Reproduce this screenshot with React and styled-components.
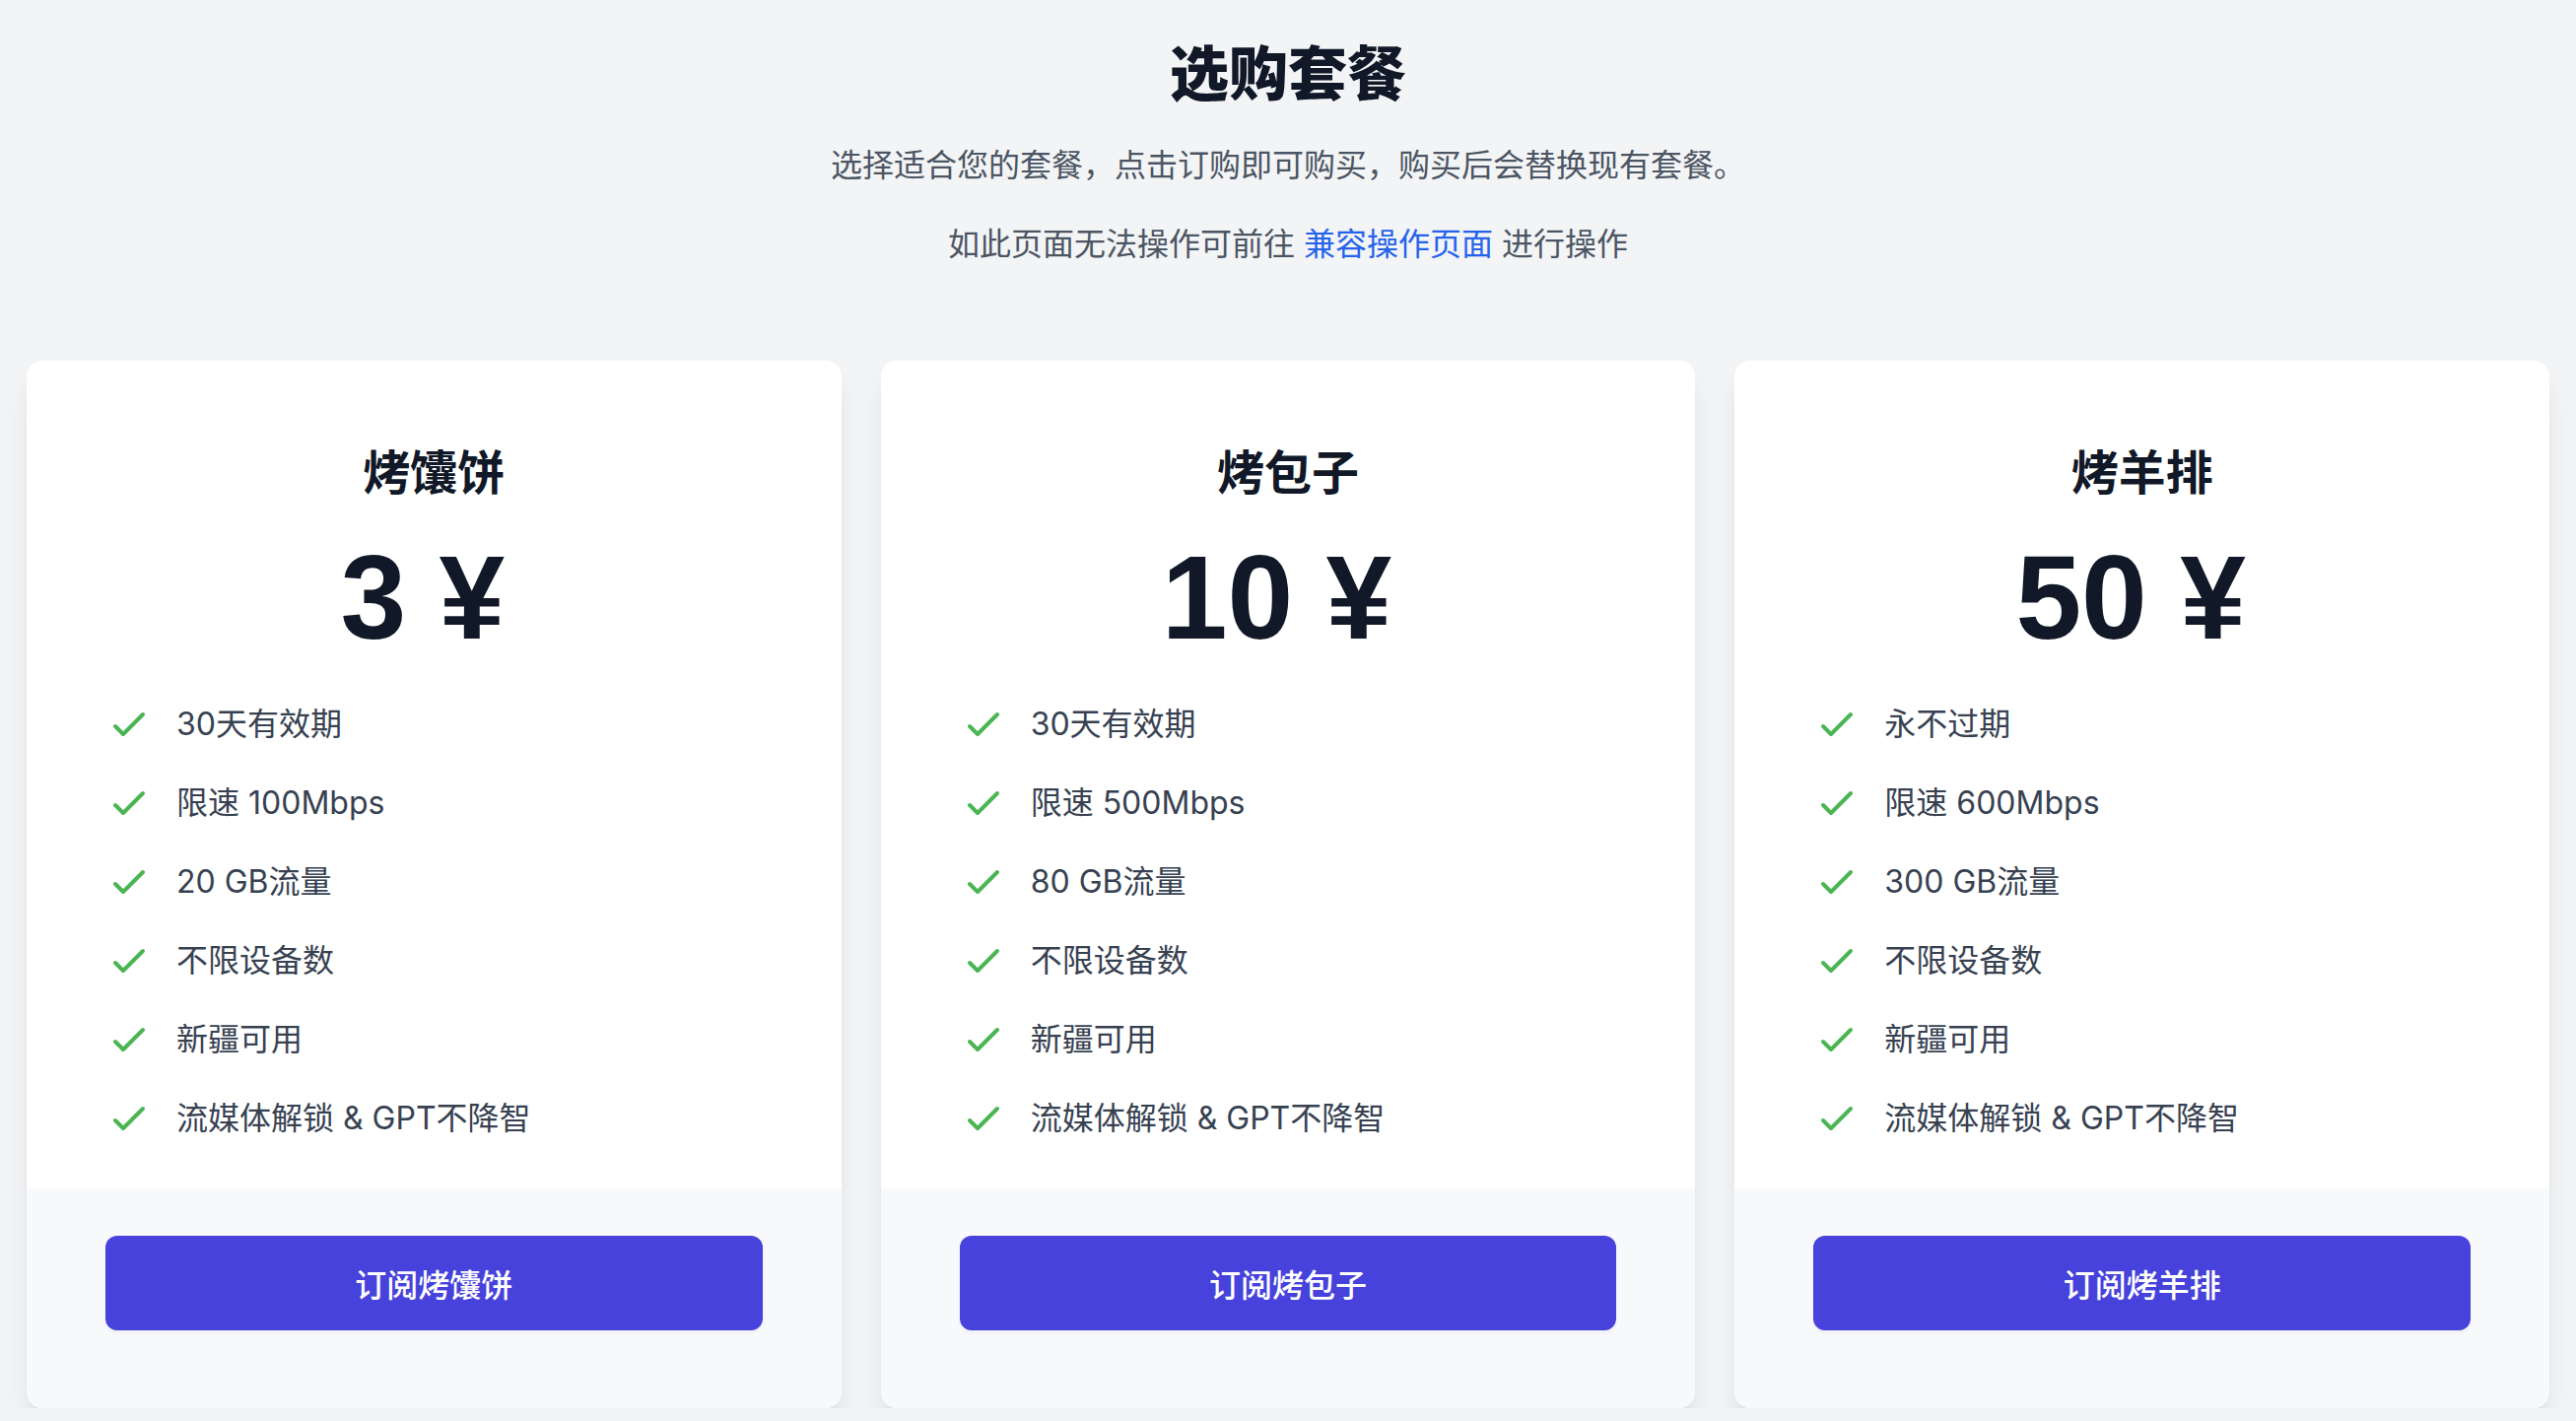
import React from "react";
import styled, { createGlobalStyle } from "styled-components";

const GlobalStyle = createGlobalStyle`
  html, body { margin: 0; padding: 0; }
  body {
    background: #f3f4f6;
    font-family: "Inter", "Noto Sans CJK SC", "Noto Sans", sans-serif;
    color: #111827;
  }
  * { box-sizing: border-box; }
`;

const Page = styled.div`
  padding: 39px 27px 0;
`;

const Header = styled.header`
  text-align: center;
`;

const Title = styled.h1`
  margin: 0;
  font-size: 60px;
  line-height: 72px;
  font-weight: 800;
  color: #111827;
`;

const Lead = styled.p`
  margin: 33px 0 0;
  font-size: 32px;
  line-height: 48px;
  color: #4b5563;
  & + & { margin-top: 32px; }
`;

const Link = styled.a`
  color: #2563eb;
  text-decoration: none;
`;

const Grid = styled.div`
  margin-top: 94px;
  display: grid;
  grid-template-columns: repeat(3, 1fr);
  gap: 40px;
`;

const Card = styled.div`
  display: flex;
  flex-direction: column;
  background: #ffffff;
  border-radius: 16px;
  overflow: hidden;
  box-shadow: 0 20px 30px -6px rgba(0, 0, 0, 0.1), 0 8px 12px -8px rgba(0, 0, 0, 0.1);
`;

const Body = styled.div`
  padding: 82px 80px 47px;
  flex: 1;
`;

const Name = styled.h3`
  margin: 0;
  text-align: center;
  font-size: 48px;
  line-height: 64px;
  font-weight: 700;
  color: #111827;
`;

const Price = styled.div`
  margin-top: 34px;
  padding-right: 23px;
  text-align: center;
  font-family: "Liberation Sans", Arial, sans-serif;
  font-size: 120px;
  line-height: 120px;
  font-weight: 800;
  color: #111827;
`;

const Features = styled.ul`
  list-style: none;
  margin: 45px 0 0;
  padding: 0;
  display: flex;
  flex-direction: column;
  gap: 32px;
`;

const Feature = styled.li`
  display: flex;
  align-items: center;
  height: 48px;
  font-size: 32px;
  line-height: 48px;
  color: #374151;
`;

const CheckIcon = styled.svg`
  flex: none;
  width: 48px;
  height: 48px;
  color: #4ab552;
  margin-right: 24px;
`;

const Footer = styled.div`
  background: #f8f9fb;
  padding: 48px 80px 79px;
`;

const Button = styled.button`
  display: block;
  width: 100%;
  height: 96px;
  border: none;
  border-radius: 12px;
  background: #4642db;
  color: #ffffff;
  font-family: "Inter", "Noto Sans CJK SC", sans-serif;
  font-size: 32px;
  font-weight: 500;
  cursor: pointer;
  box-shadow: 0 2px 4px rgba(0, 0, 0, 0.05);
`;

const Check = () => (
  <CheckIcon viewBox="0 0 24 24" fill="none" stroke="currentColor" strokeWidth="2" strokeLinecap="round" strokeLinejoin="round">
    <path d="M5 13l4 4L19 7" />
  </CheckIcon>
);

const plans = [
  {
    name: "烤馕饼",
    price: "3",
    features: ["30天有效期", "限速 100Mbps", "20 GB流量", "不限设备数", "新疆可用", "流媒体解锁 & GPT不降智"],
  },
  {
    name: "烤包子",
    price: "10",
    features: ["30天有效期", "限速 500Mbps", "80 GB流量", "不限设备数", "新疆可用", "流媒体解锁 & GPT不降智"],
  },
  {
    name: "烤羊排",
    price: "50",
    features: ["永不过期", "限速 600Mbps", "300 GB流量", "不限设备数", "新疆可用", "流媒体解锁 & GPT不降智"],
  },
];

export default function App() {
  return (
    <>
      <GlobalStyle />
      <Page>
        <Header>
          <Title>选购套餐</Title>
          <Lead>选择适合您的套餐，点击订购即可购买，购买后会替换现有套餐。</Lead>
          <Lead>
            如此页面无法操作可前往 <Link href="#">兼容操作页面</Link> 进行操作
          </Lead>
        </Header>
        <Grid>
          {plans.map((p) => (
            <Card key={p.name}>
              <Body>
                <Name>{p.name}</Name>
                <Price>{p.price} ¥</Price>
                <Features>
                  {p.features.map((f) => (
                    <Feature key={f}>
                      <Check />
                      <span>{f}</span>
                    </Feature>
                  ))}
                </Features>
              </Body>
              <Footer>
                <Button>订阅{p.name}</Button>
              </Footer>
            </Card>
          ))}
        </Grid>
      </Page>
    </>
  );
}
